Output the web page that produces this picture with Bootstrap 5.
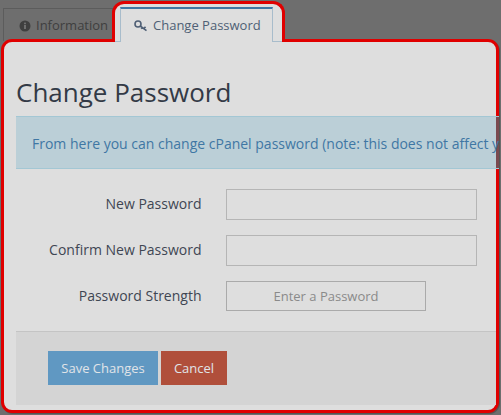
<!DOCTYPE html>
<html lang="en">
<head>
<meta charset="utf-8">
<title>Change Password</title>
<link href="https://cdn.jsdelivr.net/npm/bootstrap@5.3.0/dist/css/bootstrap.min.css" rel="stylesheet">
<style>
html,body{height:415px;overflow:hidden}
body{background:#6e6e6e;font-family:"Open Sans",sans-serif;font-size:13px;color:#3a3f48}
.shot{width:501px;height:415px;overflow:hidden}
.tabbar{height:41px;padding-left:3px;position:relative;z-index:2;align-items:flex-end}
.tab-off{height:33px;width:110px;border:1px solid #5c5c5c;border-bottom:0;color:#3f3f3f;padding-left:15px;line-height:33px;white-space:nowrap;overflow:hidden}
.tab-off svg{margin-right:5px;vertical-align:-2px}
.tab-halo{height:41px;width:173px;margin:0 0 -1px -1px;flex:none;border:3px solid #e00000;border-bottom:0;border-radius:12px 12px 0 0;background:linear-gradient(to top,#a8bccb 1px,#dedede 0);padding:3px 9px 0 5px}
.tab-on{height:35px;background:#dedede;border:1px solid #a8bccb;border-top:2px solid #3f77a4;border-bottom:0;color:#4f5f75;line-height:33px;padding-left:13px;white-space:nowrap}
.tab-on svg{margin-right:5px;vertical-align:-2px}
.sheet{height:374px;width:498px;margin:-2px 0 0 1px;background:#dedede;border:3px solid #e00000;border-radius:11px;padding:0 0 7px 12px;position:relative;box-shadow:1px 1px 0 #555}
.sheet-title{font-size:26px;font-weight:400;line-height:34px;margin:33px 0 0;color:#333a46;white-space:nowrap}
.note{margin:7px -3px 0 0;height:53px;background:linear-gradient(to right,#bbcfd7 calc(100% - 3px),#7a4a50 0);border:1px solid #a3c7d4;border-width:1px 0;border-radius:0;padding:0 0 0 16px;line-height:53px;font-size:14px;color:#3f77a4;white-space:nowrap;overflow:hidden}
.field-row{height:31px;margin-bottom:15px;align-items:flex-start}
.field-row:first-of-type{margin-top:20px}
.field-label{width:185.5px;text-align:right;font-size:14px;line-height:30px;margin:0;color:#3f4653;white-space:nowrap}
.field-box{width:251px;height:31px;margin-left:24.5px;background:transparent;border:1px solid #b5b5b5;border-radius:0}
.strength{width:200px;height:30px;margin-left:24.5px;border:1px solid #aaa;color:#8a8a8a;text-align:center;line-height:28px}
.foot{margin-top:19px;height:74px;background:#d4d4d4;border-top:1px solid #c4c4c4;padding:19px 0 0 32px}
.foot .btn{height:34px;border:0;border-radius:0;font-size:13px;line-height:34px;padding:0;color:#e0e4e8}
.save-btn{width:110px;background:#6098c2}
.cancel-btn{width:66px;margin-left:3px;background:#b04f3b}
</style>
</head>
<body>
<div class="shot">
  <div class="tabbar d-flex">
    <div class="tab-off">
      <svg width="12" height="12" viewBox="0 0 12 12"><circle cx="6" cy="6" r="5.5" fill="#3f3f3f"/><rect x="5" y="5" width="2" height="4" fill="#6e6e6e"/><rect x="5" y="2.6" width="2" height="1.6" fill="#6e6e6e"/></svg>Information
    </div>
    <div class="tab-halo">
      <div class="tab-on">
        <svg width="14" height="12" viewBox="0 0 14 12" fill="none" stroke="#4f5f75" stroke-width="1.6"><circle cx="4" cy="4" r="3"/><path d="M6.2 6l6.3 4.6M10 8.8l1.5-2M8.2 7.5l-1 1.2"/></svg>Change Password
      </div>
    </div>
  </div>
  <div class="sheet">
    <h1 class="sheet-title">Change Password</h1>
    <div class="alert alert-info note">From here you can change cPanel password (note: this does not affect your other accounts)</div>
    <form>
      <div class="d-flex field-row">
        <label class="field-label" for="np">New Password</label>
        <input class="form-control field-box" id="np" type="password">
      </div>
      <div class="d-flex field-row">
        <label class="field-label" for="cp">Confirm New Password</label>
        <input class="form-control field-box" id="cp" type="password">
      </div>
      <div class="d-flex field-row">
        <span class="field-label">Password Strength</span>
        <div class="strength">Enter a Password</div>
      </div>
      <div class="foot d-flex">
        <button type="button" class="btn save-btn">Save Changes</button>
        <button type="button" class="btn cancel-btn">Cancel</button>
      </div>
    </form>
  </div>
</div>
<script src="https://cdn.jsdelivr.net/npm/bootstrap@5.3.0/dist/js/bootstrap.bundle.min.js"></script>
</body>
</html>
